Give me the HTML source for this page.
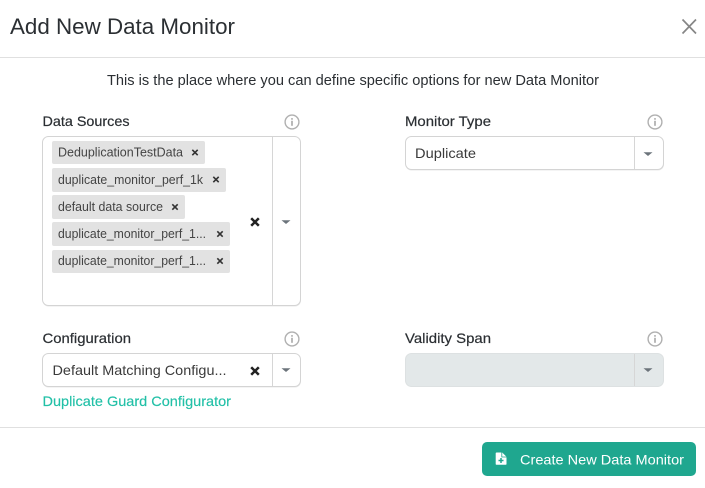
<!DOCTYPE html>
<html lang="en">
<head>
<meta charset="utf-8">
<title>Add New Data Monitor</title>
<style>
html,body{margin:0;padding:0;background:#fff;width:705px;height:488px;overflow:hidden}
svg{display:block}
text{font-family:"Liberation Sans",sans-serif;white-space:pre}
.lbl{font-size:14px;fill:#2b2f33;stroke:#2b2f33;stroke-width:.2}
.val{font-size:14px;fill:#3a3a3a}
.chip{font-size:12.5px;fill:#444}
.box{fill:#fff;stroke:#d4d4d4;stroke-width:1}
.shadow{fill:#e9e9e9}
.div{stroke:#d6d6d6;stroke-width:1}
.caret{fill:#6c747b}
.cx{stroke:#222;stroke-width:2.5;fill:none}
.sx{stroke:#333;stroke-width:1.6;fill:none}
.info circle{fill:none;stroke:#b0b0b0;stroke-width:1.4}
.info rect{fill:#a8a8a8}
</style>
</head>
<body>
<svg width="705" height="488" viewBox="0 0 705 488" xmlns="http://www.w3.org/2000/svg">
<defs>
<g id="info" class="info"><circle cx="0" cy="0" r="6.9"/><rect x="-.8" y="-1.2" width="1.6" height="5"/><rect x="-.8" y="-3.9" width="1.6" height="1.6"/></g>
<path id="car" class="caret" d="M-4.500-1.800H4.500L0 2Z"/>
<path id="sx" class="sx" d="M-2.700-2.700 2.700 2.700M2.700-2.700-2.700 2.700"/>
<path id="cx" class="cx" d="M-3.800-3.800 3.800 3.800M3.800-3.800-3.800 3.800"/>
</defs>

<text x="10" y="34" font-size="22" fill="#2b2f33" textLength="225" lengthAdjust="spacingAndGlyphs">Add New Data Monitor</text>
<path d="M682.500 19.500 696 33.500M696 19.500 682.500 33.500" stroke="#868686" stroke-width="1.700" fill="none"/>
<rect x="0" y="57" width="705" height="1" fill="#e0e0e0"/>
<text x="107" y="85" font-size="14.500" fill="#2b2f33" textLength="492" lengthAdjust="spacingAndGlyphs">This is the place where you can define specific options for new Data Monitor</text>

<!-- Data Sources -->
<text class="lbl" x="42.500" y="126" textLength="87" lengthAdjust="spacingAndGlyphs">Data Sources</text>
<use href="#info" x="292" y="122"/>
<rect class="shadow" x="42.500" y="137.500" width="258.500" height="169" rx="6"/>
<rect class="box" x="42.500" y="136.500" width="258" height="169" rx="6"/>
<line class="div" x1="272.500" y1="137" x2="272.500" y2="305"/>

<rect x="52" y="141" width="153" height="23" rx="2" fill="#e2e2e2"/>
<text class="chip" x="58" y="156.500" textLength="125" lengthAdjust="spacingAndGlyphs">DeduplicationTestData</text>
<use href="#sx" x="195" y="152.500"/>

<rect x="52" y="168" width="174" height="24" rx="2" fill="#e2e2e2"/>
<text class="chip" x="58" y="184" textLength="145" lengthAdjust="spacingAndGlyphs">duplicate_monitor_perf_1k</text>
<use href="#sx" x="216" y="179.500"/>

<rect x="52" y="195" width="133" height="24" rx="2" fill="#e2e2e2"/>
<text class="chip" x="58" y="211" textLength="105" lengthAdjust="spacingAndGlyphs">default data source</text>
<use href="#sx" x="175" y="207"/>

<rect x="52" y="222" width="178" height="24" rx="2" fill="#e2e2e2"/>
<text class="chip" x="58" y="238" textLength="148" lengthAdjust="spacingAndGlyphs">duplicate_monitor_perf_1...</text>
<use href="#sx" x="220" y="234"/>

<rect x="52" y="250" width="178" height="23" rx="2" fill="#e2e2e2"/>
<text class="chip" x="58" y="265" textLength="148" lengthAdjust="spacingAndGlyphs">duplicate_monitor_perf_1...</text>
<use href="#sx" x="220" y="261"/>

<use href="#cx" x="255" y="222"/>
<use href="#car" x="286" y="222"/>

<!-- Monitor Type -->
<text class="lbl" x="405" y="126" textLength="86" lengthAdjust="spacingAndGlyphs">Monitor Type</text>
<use href="#info" x="655" y="122"/>
<rect class="shadow" x="405.500" y="137.500" width="258.500" height="33" rx="6"/>
<rect class="box" x="405.500" y="136.500" width="258" height="33" rx="6"/>
<line class="div" x1="634.500" y1="137" x2="634.500" y2="169"/>
<text class="val" x="415" y="158" textLength="61" lengthAdjust="spacingAndGlyphs">Duplicate</text>
<use href="#car" x="648" y="154"/>

<!-- Configuration -->
<text class="lbl" x="42.500" y="343" textLength="88.500" lengthAdjust="spacingAndGlyphs">Configuration</text>
<use href="#info" x="292" y="339"/>
<rect class="shadow" x="42.500" y="354.500" width="258.500" height="33" rx="6"/>
<rect class="box" x="42.500" y="353.500" width="258" height="33" rx="6"/>
<line class="div" x1="272.500" y1="354" x2="272.500" y2="386"/>
<text class="val" x="52.500" y="375" textLength="174" lengthAdjust="spacingAndGlyphs">Default Matching Configu...</text>
<use href="#cx" x="255" y="371"/>
<use href="#car" x="286" y="370"/>
<text x="42.500" y="406" font-size="14" fill="#22c0a7" stroke="#22c0a7" stroke-width=".15" textLength="188.500" lengthAdjust="spacingAndGlyphs">Duplicate Guard Configurator</text>

<!-- Validity Span -->
<text class="lbl" x="405" y="343" textLength="86" lengthAdjust="spacingAndGlyphs">Validity Span</text>
<use href="#info" x="655" y="339"/>
<rect x="405.500" y="353.500" width="258" height="33" rx="6" fill="#e3e8e9" stroke="#dde1e2"/>
<line class="div" x1="634.500" y1="354" x2="634.500" y2="386"/>
<use href="#car" x="648" y="370"/>

<!-- Footer -->
<rect x="0" y="427" width="705" height="1" fill="#e0e0e0"/>
<rect x="482" y="442" width="214" height="34" rx="5" fill="#1fa78f"/>
<path d="M496.500 452.500h5.700l4.300 4.300v7.200a.8.8 0 0 1-.8.8h-9.200a.8.8 0 0 1-.8-.8v-10.700a.8.8 0 0 1 .8-.8z" fill="#fff"/>
<path d="M501.800 452.500v4.500h4.700" fill="none" stroke="#1fa78f" stroke-width=".8"/>
<path d="M501 458v5M498.500 460.500h5" stroke="#1fa78f" stroke-width="1.500" fill="none"/>
<text x="520" y="464.500" font-size="14" fill="#fff" textLength="164" lengthAdjust="spacingAndGlyphs">Create New Data Monitor</text>
</svg>
</body>
</html>
